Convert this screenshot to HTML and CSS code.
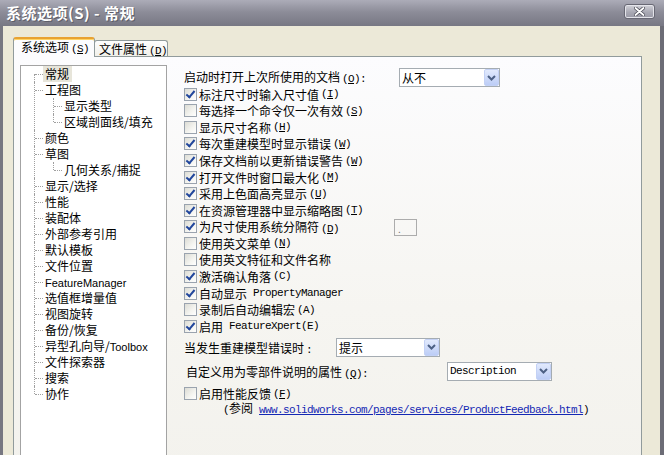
FILE: index.html
```html
<!DOCTYPE html>
<html lang="zh-CN">
<head>
    <meta charset="UTF-8">
    <title>系统选项(S) - 常规</title>
    <link rel="stylesheet" href="styles.css">
</head>
<body>
    <div class="window">
        <div class="titlebar">
            <span class="title">系统选项(S) - 常规</span>
            <span class="close">
                <svg width="11" height="9" viewBox="0 0 11 9">
                    <path d="M1.5 1 L9.5 8 M9.5 1 L1.5 8" stroke="#4a4a55" stroke-width="3.4" stroke-linecap="round"/>
                    <path d="M1.5 1 L9.5 8 M9.5 1 L1.5 8" stroke="#fff" stroke-width="1.8" stroke-linecap="round"/>
                </svg>
            </span>
        </div>
        <div class="client">
            <div class="tabs">
                <div class="tab active">系统选项<span class="k">(<u>S</u>)</span></div>
                <div class="tab">文件属性<span class="k">(<u>D</u>)</span></div>
            </div>
            <div class="panel">
                <ul class="tree">
                    <li><span class="node"><span class="sel">常规</span></span></li>
                    <li><span class="node">工程图</span>
                        <ul>
                            <li><span class="node">显示类型</span></li>
                            <li><span class="node">区域剖面线/填充</span></li>
                        </ul>
                    </li>
                    <li><span class="node">颜色</span></li>
                    <li><span class="node">草图</span>
                        <ul>
                            <li><span class="node">几何关系/捕捉</span></li>
                        </ul>
                    </li>
                    <li><span class="node">显示/选择</span></li>
                    <li><span class="node">性能</span></li>
                    <li><span class="node">装配体</span></li>
                    <li><span class="node">外部参考引用</span></li>
                    <li><span class="node">默认模板</span></li>
                    <li><span class="node">文件位置</span></li>
                    <li><span class="node"><span class="lat">FeatureManager</span></span></li>
                    <li><span class="node">选值框增量值</span></li>
                    <li><span class="node">视图旋转</span></li>
                    <li><span class="node">备份/恢复</span></li>
                    <li><span class="node">异型孔向导/<span class="lat">Toolbox</span></span></li>
                    <li><span class="node">文件探索器</span></li>
                    <li><span class="node">搜索</span></li>
                    <li><span class="node">协作</span></li>
                </ul>

                <div class="options">
                    <div class="line r-open">
                        <span class="lbl w-open">启动时打开上次所使用的文档<span class="k">(<u>O</u>):</span></span>
                        <div class="combo c-open">
                            <span class="val">从不</span>
                            <span class="btn"><svg width="9" height="6" viewBox="0 0 9 6"><path d="M1 1 L4.5 4.5 L8 1" fill="none" stroke="#4d6185" stroke-width="2"/></svg></span>
                        </div>
                    </div>

                    <div class="checks">
                        <div class="chk"><span class="cb on"></span>标注尺寸时输入尺寸值<span class="k">(<u>I</u>)</span></div>
                        <div class="chk"><span class="cb"></span>每选择一个命令仅一次有效<span class="k">(<u>S</u>)</span></div>
                        <div class="chk"><span class="cb"></span>显示尺寸名称<span class="k">(<u>H</u>)</span></div>
                        <div class="chk"><span class="cb on"></span>每次重建模型时显示错误<span class="k">(<u>W</u>)</span></div>
                        <div class="chk"><span class="cb on"></span>保存文档前以更新错误警告<span class="k">(<u>W</u>)</span></div>
                        <div class="chk"><span class="cb on"></span>打开文件时窗口最大化<span class="k">(<u>M</u>)</span></div>
                        <div class="chk"><span class="cb on"></span>采用上色面高亮显示<span class="k">(<u>U</u>)</span></div>
                        <div class="chk"><span class="cb on"></span>在资源管理器中显示缩略图<span class="k">(<u>T</u>)</span></div>
                        <div class="chk"><span class="cb on"></span><span class="w-sep">为尺寸使用系统分隔符<span class="k">(<u>D</u>)</span></span><span class="sepbox">.</span></div>
                        <div class="chk"><span class="cb"></span>使用英文菜单<span class="k">(<u>N</u>)</span></div>
                        <div class="chk"><span class="cb"></span>使用英文特征和文件名称</div>
                        <div class="chk"><span class="cb on"></span>激活确认角落<span class="k">(C)</span></div>
                        <div class="chk"><span class="cb on"></span>自动显示<span class="k wide">PropertyManager</span></div>
                        <div class="chk"><span class="cb"></span>录制后自动编辑宏<span class="k">(A)</span></div>
                        <div class="chk"><span class="cb on"></span>启用<span class="k wide">FeatureXpert(E)</span></div>
                    </div>

                    <div class="line r-err">
                        <span class="lbl w-err">当发生重建模型错误时<span class="k">:</span></span>
                        <div class="combo c-err">
                            <span class="val">提示</span>
                            <span class="btn"><svg width="9" height="6" viewBox="0 0 9 6"><path d="M1 1 L4.5 4.5 L8 1" fill="none" stroke="#4d6185" stroke-width="2"/></svg></span>
                        </div>
                    </div>

                    <div class="line r-desc">
                        <span class="lbl w-desc">自定义用为零部件说明的属性<span class="k">(<u>Q</u>):</span></span>
                        <div class="combo c-desc">
                            <span class="val mono">Description</span>
                            <span class="btn"><svg width="9" height="6" viewBox="0 0 9 6"><path d="M1 1 L4.5 4.5 L8 1" fill="none" stroke="#4d6185" stroke-width="2"/></svg></span>
                        </div>
                    </div>

                    <div class="chk r-fb"><span class="cb"></span>启用性能反馈<span class="k">(<u>F</u>)</span></div>
                    <div class="r-link"><span class="mono">(</span>参阅<a class="mono" href="#">www.solidworks.com/pages/services/ProductFeedback.html</a><span class="mono">)</span></div>
                </div>
            </div>
        </div>
    </div>
</body>
</html>
```

FILE: styles.css
```css
*{
    margin: 0;
    padding: 0;
    box-sizing: border-box;
}
body{
    width: 664px;
    height: 455px;
    overflow: hidden;
    background: #ece9d8;
    font-family: "Noto Sans CJK SC", "Noto Sans", sans-serif;
    font-size: 12px;
    color: #000;
}
.window{
    width: 664px;
    height: 455px;
    display: flex;
    flex-direction: column;
}

/* title bar */
.titlebar{
    height: 26px;
    flex: none;
    display: flex;
    align-items: center;
    justify-content: space-between;
    padding: 0 9px 0 6px;
    background: linear-gradient(#acacb8, #8d8d99 45%, #777783);
}
.title{
    color: #fff;
    font-size: 15px;
    font-weight: bold;
    letter-spacing: 0.5px;
    text-shadow: 1px 1px 0 #5d5d68;
    line-height: 26px;
    margin-top: -1px;
}
.close{
    width: 31px;
    height: 15px;
    margin-top: -3px;
    border: 1px solid #686874;
    border-radius: 3px;
    background: linear-gradient(#d2d2d9, #a9a9b4 55%, #9a9aa6);
    box-shadow: inset 0 0 0 1px #e4e4ea;
    display: flex;
    align-items: center;
    justify-content: center;
}

/* client area */
.client{
    flex: 1;
    border-left: 3px solid #777781;
    border-right: 4px solid #6c6c76;
    padding: 11px 18px 0 10px;
    display: flex;
    flex-direction: column;
}
.tabs{
    height: 19px;
    display: flex;
    align-items: flex-end;
}
.tab{
    height: 16px;
    width: 74px;
    margin-left: -1px;
    padding-left: 4px;
    border: 1px solid #919b9c;
    border-bottom: none;
    border-radius: 3px 3px 0 0;
    background: linear-gradient(#fefefe, #f1f0ea);
    line-height: 15px;
    white-space: nowrap;
}
.tab.active{
    width: 82px;
    height: 20px;
    margin: 0 0 -1px 0;
    padding-left: 7px;
    position: relative;
    z-index: 1;
    border-top: 2px solid #e8a232;
    box-shadow: inset 0 1px 0 #ffd464;
    background: #fcfcfe;
    line-height: 16px;
}

/* latin text set in the fixed-pitch face, 6px per character */
.k, .mono{
    font-family: "Liberation Mono", monospace;
    font-size: 11px;
    letter-spacing: -0.6px;
}
.k{
    margin-left: 2px;
}
.k.wide{
    margin-left: 6px;
}
.lat{
    font-family: "Liberation Sans", sans-serif;
    font-size: 11px;
}

/* panel */
.panel{
    height: 420px;
    border: 1px solid #919b9c;
    background: linear-gradient(#fcfcfe, #f6f5f1 60%, #f3f2ed);
    display: flex;
    align-items: flex-start;
    padding: 8px 0 0 6px;
}

/* tree */
.tree{
    width: 147px;
    height: 400px;
    flex: none;
    border: 1px solid #a3a3a3;
    background: #fff;
    list-style: none;
}
.tree ul{
    list-style: none;
    padding-left: 19px;
}
.tree li{
    position: relative;
}
.tree li::before{
    content: '';
    position: absolute;
    left: 13px;
    top: 0;
    bottom: 0;
    border-left: 1px dotted #a0a0a0;
}
.tree > li:first-child::before{
    top: 8px;
}
.tree li:last-child::before{
    bottom: auto;
    height: 8px;
}
.tree .node{
    display: block;
    position: relative;
    height: 16px;
    line-height: 16px;
    padding-left: 24px;
    white-space: nowrap;
}
.tree .node::before{
    content: '';
    position: absolute;
    left: 14px;
    top: 8px;
    width: 8px;
    border-top: 1px dotted #a0a0a0;
}
.tree .sel{
    display: inline-block;
    height: 16px;
    margin-left: -2px;
    padding: 0 3px 0 2px;
    background: #e7e5da;
}

/* option column */
.options{
    margin: 3px 0 0 17px;
    display: flex;
    flex-direction: column;
}
.line{
    display: flex;
    align-items: center;
    white-space: nowrap;
}
.lbl{
    display: inline-block;
}
.r-open{
    height: 18px;
    align-items: flex-start;
}
.r-open .lbl{
    line-height: 18px;
}
.w-open{ width: 215px; }
.r-err{
    height: 19px;
    margin-top: 3.4px;
}
.w-err{ width: 152px; }
.r-desc{
    height: 19px;
    margin-top: 5px;
}
.w-desc{
    width: 261px;
    margin-left: 2px;
}

.combo{
    height: 19px;
    border: 1px solid #a5acb2;
    background: #fff;
    display: flex;
    align-items: center;
    justify-content: space-between;
    flex: none;
}
.combo .val{
    padding-left: 2px;
}
.combo .btn{
    width: 15px;
    height: 17px;
    border: 1px solid #c3d1f5;
    border-radius: 2px;
    background: linear-gradient(#e2eafd, #bccdf6);
    display: flex;
    align-items: center;
    justify-content: center;
}
.c-open{ width: 101px; }
.c-err{ width: 104px; }
.c-desc{ width: 105px; }

/* checkboxes */
.checks{
    display: flex;
    flex-direction: column;
}
.chk{
    height: 16.57px;
    display: flex;
    align-items: center;
    white-space: nowrap;
}
.cb{
    width: 13px;
    height: 13px;
    margin-right: 2px;
    flex: none;
    position: relative;
    border: 1px solid #9aa3ae;
    background: linear-gradient(135deg, #dcdcd5, #f4f4f0 60%, #fff);
}
.cb.on::after{
    content: '';
    position: absolute;
    left: 3px;
    top: 0px;
    width: 3px;
    height: 7px;
    border-right: 2px solid #21469c;
    border-bottom: 2px solid #21469c;
    transform: rotate(40deg);
}
.w-sep{
    display: inline-block;
    width: 195px;
}
.sepbox{
    width: 23px;
    height: 17px;
    margin-top: 2px;
    border: 1px solid #acacac;
    color: #777;
    font-size: 10px;
    line-height: 18px;
    padding-left: 3px;
}

.r-fb{
    height: 14px;
    line-height: 14px;
    margin-top: 6px;
}
.r-link{
    height: 13px;
    line-height: 13px;
    padding-left: 39px;
    white-space: nowrap;
}
.r-link a{
    margin-left: 6px;
    color: #1428b4;
    text-decoration: underline;
}
```
